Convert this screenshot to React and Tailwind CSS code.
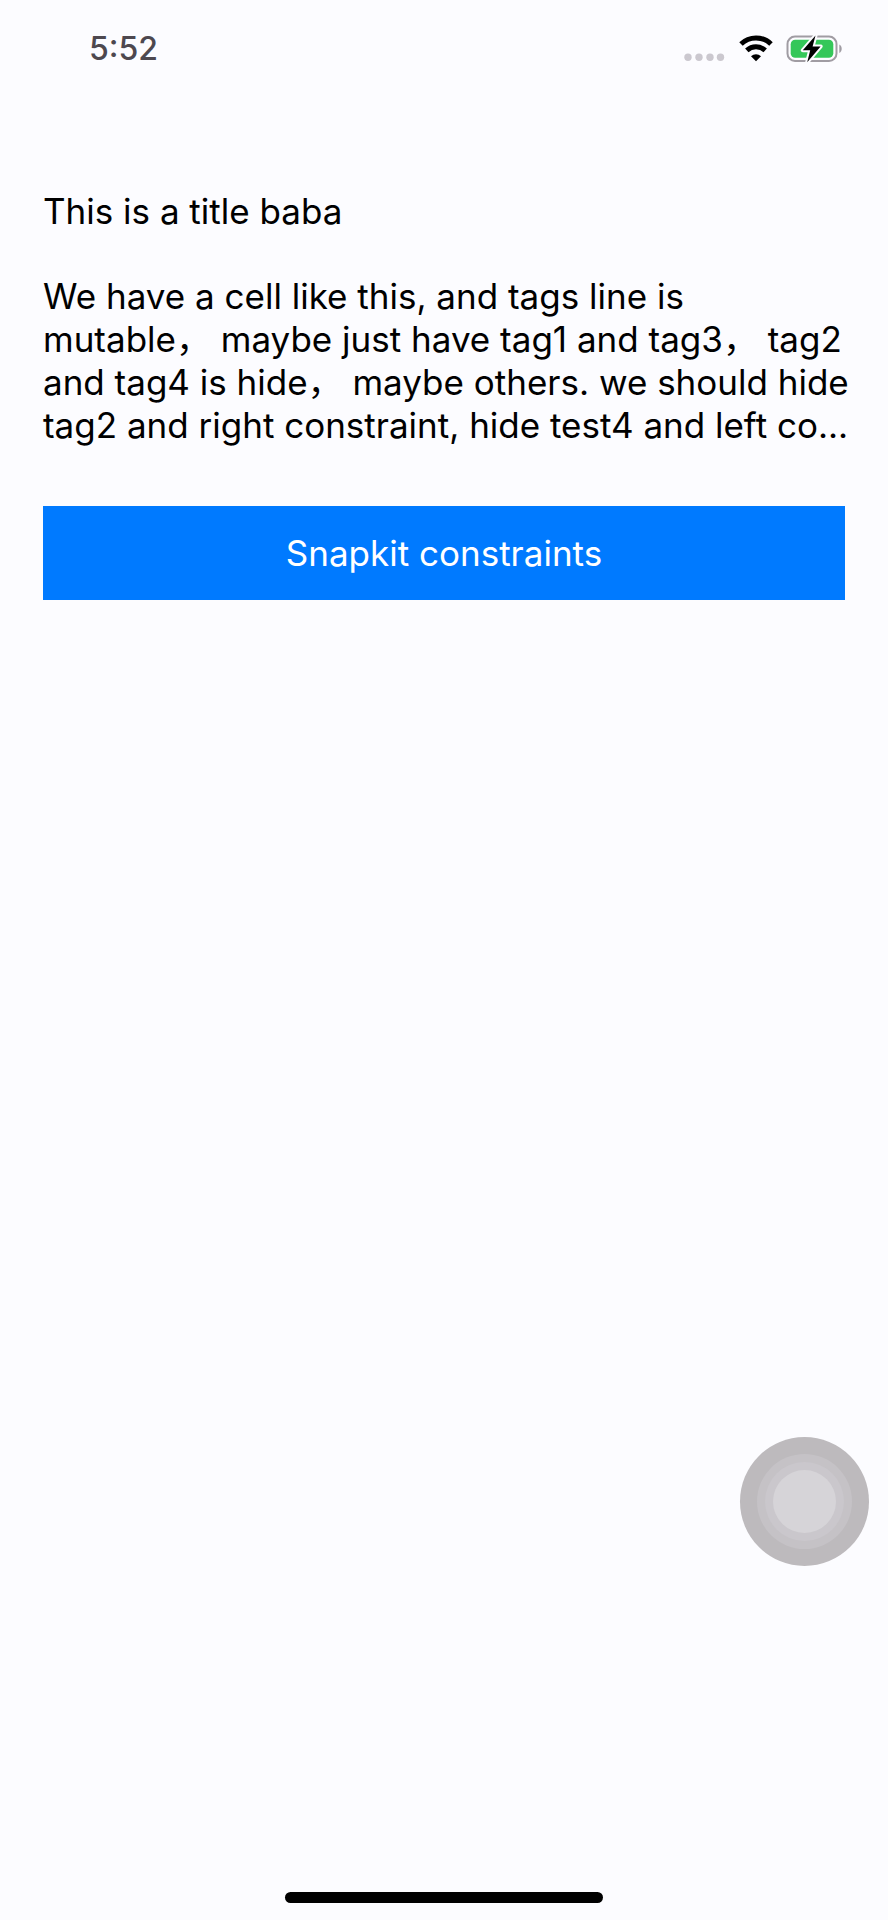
const LINES = [
  "We have a cell like this, and tags line is",
  "mutable， maybe just have tag1 and tag3， tag2",
  "and tag4 is hide， maybe others. we should hide",
  "tag2 and right constraint, hide test4 and left co...",
];

function SignalDots() {
  return (
    <svg width="43" height="28" viewBox="0 0 43 28" fill="#cbc8cf" aria-hidden="true">
      <circle cx="4" cy="22.3" r="3.7" />
      <circle cx="15" cy="22.3" r="3.7" />
      <circle cx="26" cy="22.3" r="3.7" />
      <circle cx="36.5" cy="22.3" r="3.7" />
    </svg>
  );
}

function Wifi() {
  return (
    <svg width="34" height="28" viewBox="0 0 34 28" fill="none" stroke="#000" aria-hidden="true">
      <path d="M2 9 A21.5 21.5 0 0 1 32 9" strokeWidth="5" />
      <path d="M7.8 15.4 A13.6 13.6 0 0 1 26.2 15.4" strokeWidth="5" />
      <path d="M17 26.3 L12 21.2 A7.4 7.4 0 0 1 22 21.2 Z" fill="#000" stroke="none" />
    </svg>
  );
}

function Battery() {
  return (
    <svg width="58" height="28" viewBox="0 0 58 28" aria-hidden="true">
      <rect x="2.5" y="1.5" width="49" height="24.5" rx="7.5" fill="none" stroke="#a09ca3" strokeWidth="2" />
      <path d="M54.3 9.5 C57.5 11 57.5 16.5 54.3 18 Z" fill="#a09ca3" />
      <rect x="5.7" y="4.7" width="42.6" height="18" rx="4.5" fill="#34c759" />
      <path
        d="M30.5 0.6 L17.8 15.2 H25.2 L22.2 27.2 L35.6 11.4 H27.6 Z"
        fill="#000"
        stroke="#fcfcff"
        strokeWidth="4"
        strokeLinejoin="round"
        paintOrder="stroke"
      />
    </svg>
  );
}

export default function App() {
  return (
    <div className="relative flex min-h-screen flex-col bg-[#fcfcff] font-['Inter','Noto_Sans_CJK_SC',sans-serif] text-black">
      <header className="flex h-[98px] items-center justify-between pr-[45px] pl-[89px]">
        <time className="text-[32px] leading-10 font-medium text-[#4d484f]">5:52</time>
        <div className="flex items-center gap-3">
          <SignalDots />
          <Wifi />
          <Battery />
        </div>
      </header>

      <main className="flex flex-col px-[43px] pt-[92px] text-[35px] leading-[43px]">
        <h1>This is a title baba</h1>
        <p className="mt-[42px]">
          {LINES.map((line) => (
            <span key={line} className="block whitespace-nowrap">
              {line}
            </span>
          ))}
        </p>
        <button type="button" className="mt-[59px] h-[94px] w-full bg-[#007aff] text-white">
          Snapkit constraints
        </button>
      </main>

      <footer className="mt-auto flex justify-center pb-[17px]">
        <div className="h-[11px] w-[318px] rounded-full bg-black" />
      </footer>

      <button
        type="button"
        aria-label="AssistiveTouch"
        className="absolute right-[19px] bottom-[354px] flex size-[129px] items-center justify-center rounded-full bg-[#bdbabd]"
      >
        <span className="flex size-[95px] items-center justify-center rounded-full bg-[#c5c2c6]">
          <span className="flex size-[79px] items-center justify-center rounded-full bg-[#cac7cc]">
            <span className="size-[63px] rounded-full bg-[#d6d4d8]" />
          </span>
        </span>
      </button>
    </div>
  );
}
